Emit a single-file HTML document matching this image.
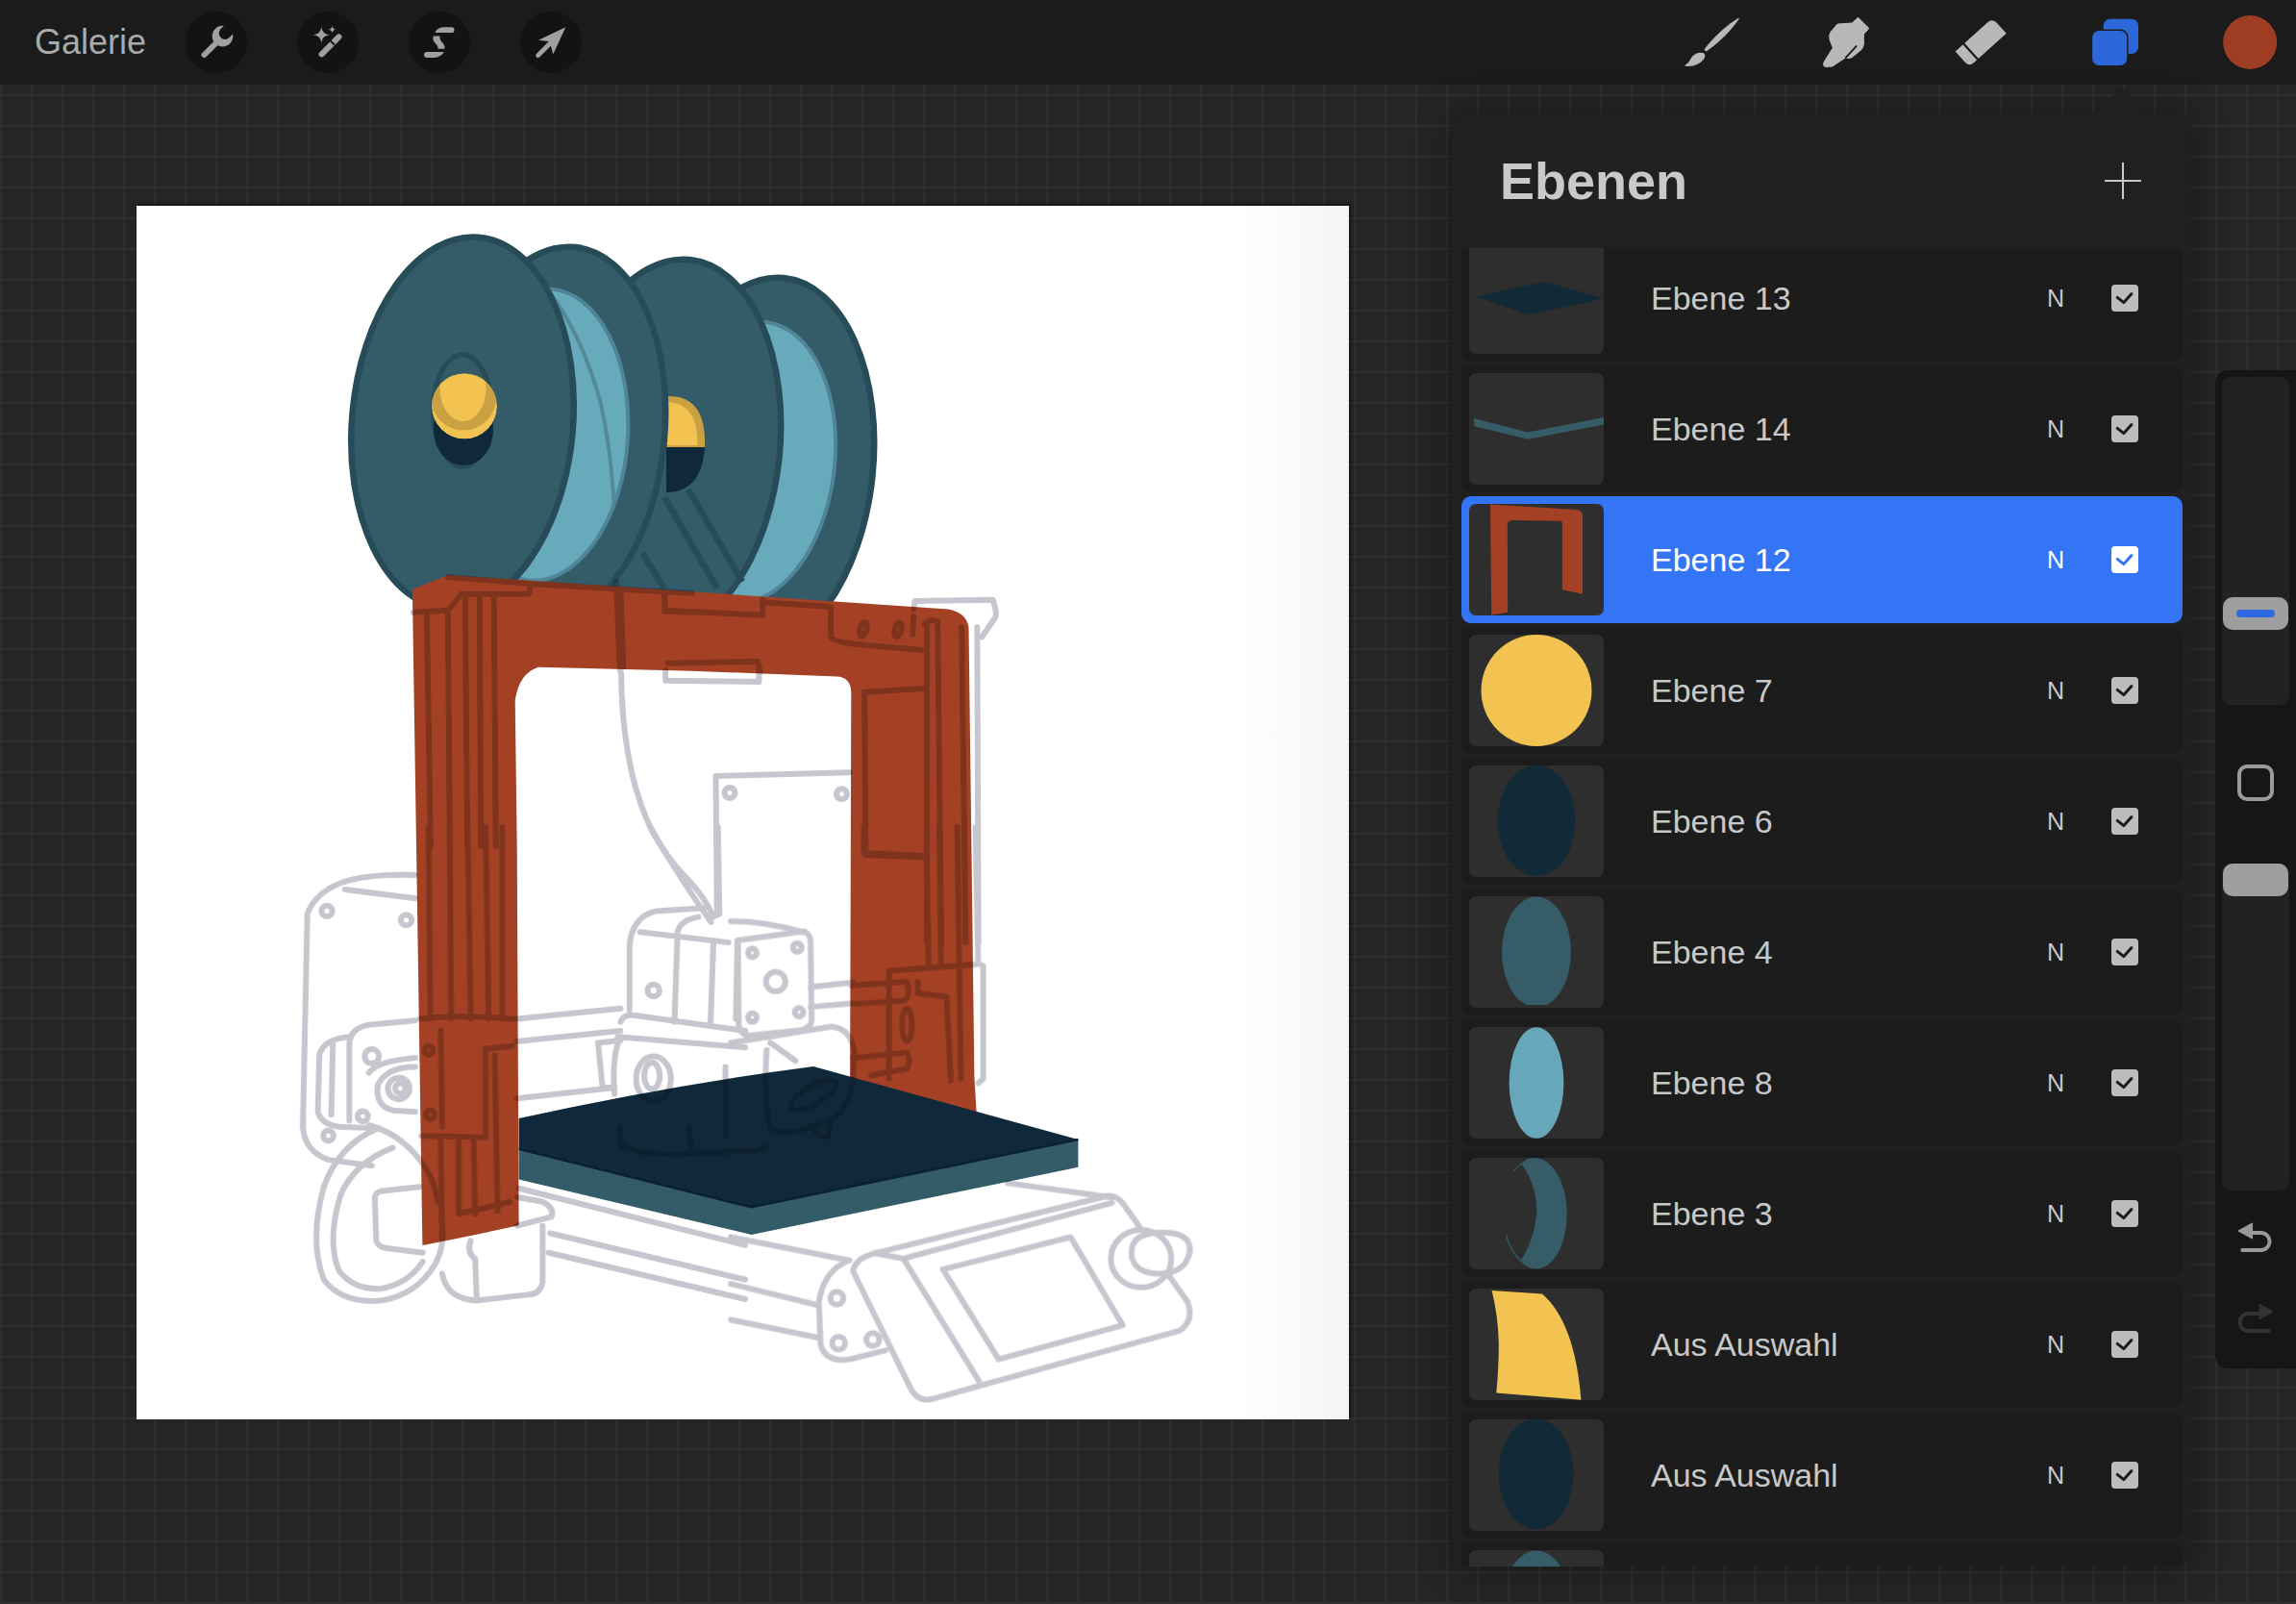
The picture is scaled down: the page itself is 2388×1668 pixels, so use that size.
<!DOCTYPE html>
<html><head><meta charset="utf-8">
<style>
*{margin:0;padding:0;box-sizing:border-box}
html,body{width:2388px;height:1668px;overflow:hidden;background:#252525;font-family:"Liberation Sans",sans-serif}
#grid{position:absolute;left:0;top:0;width:2388px;height:1668px;background-color:#252525;
 background-image:linear-gradient(to right,#2f2f2f 2px,transparent 2px),linear-gradient(to bottom,#2f2f2f 2px,transparent 2px);
 background-size:32px 32px,32px 32px;background-position:0 0,0 2px}
#topbar{position:absolute;left:0;top:0;width:2388px;height:88px;background:#1b1b1b}
.abs{position:absolute}
#galerie{position:absolute;left:36px;top:23px;font-size:36px;color:#aaaaaa;line-height:42px;letter-spacing:0px}
.circ{position:absolute;width:64px;height:64px;border-radius:50%;background:#131313;top:12px}
#canvas{position:absolute;left:142px;top:214px;width:1261px;height:1262px;background:linear-gradient(to right,#ffffff 0%,#ffffff 91%,#f4f4f4 100%);box-shadow:2px -2px 2.5px rgba(0,0,0,.45)}
#panel{position:absolute;left:1510px;top:118px;width:767px;height:1511px;background:#202020;border-radius:14px;box-shadow:0 0 34px 4px rgba(0,0,0,.32)}
#title{position:absolute;left:1560px;top:157px;font-size:54px;font-weight:bold;color:#c9c9c9;line-height:62px}
#list{position:absolute;left:1510px;top:258px;width:767px;height:1371px;overflow:hidden;border-radius:0 0 14px 14px}
.row{position:absolute;left:10px;width:750px;height:132px;border-radius:10px;background:#1c1c1c}
.row.sel{background:#3375f5}
.thumb{position:absolute;left:8px;top:8px;width:140px;height:116px;border-radius:7px;background:#2e2e2e;overflow:hidden}
.thumb svg{position:absolute;left:0;top:0}
.name{position:absolute;left:197px;top:46px;font-size:34px;line-height:40px;color:#c8c8c8;white-space:nowrap}
.sel .name{color:#ffffff}
.blend{position:absolute;left:609px;top:51px;font-size:25px;line-height:30px;color:#c8c8c8}
.sel .blend{color:#ffffff}
.cb{position:absolute;left:676px;top:52px;width:28px;height:28px;border-radius:4px;background:#bdbdbd}
.sel .cb{background:#ffffff}
.cb svg{position:absolute;left:0;top:0}
#side{position:absolute;left:2304px;top:385px;width:110px;height:1038px;border-radius:13px;background:#161616}
.track{position:absolute;left:2311px;width:70px;border-radius:9px;background:#222222}
.sthumb{position:absolute;left:2312px;width:68px;height:34px;border-radius:10px;background:#9e9e9e}
</style></head><body>
<div id="grid"></div>
<div id="topbar"></div>
<div id="galerie">Galerie</div>
<div class="circ" style="left:193px"></div>
<div class="circ" style="left:309px"></div>
<div class="circ" style="left:425px"></div>
<div class="circ" style="left:541px"></div>
<svg class="abs" style="left:0;top:0" width="2388" height="88" viewBox="0 0 2388 88">
 <defs>
  <mask id="wm"><rect x="180" y="0" width="100" height="88" fill="#fff"/><g transform="translate(234,34.6) rotate(-45)"><rect x="0" y="-6.3" width="22" height="12.6" fill="#000"/><circle r="6.3" fill="#000"/></g></mask>
 </defs>
 <!-- wrench -->
 <g fill="#a0a0a0">
  <circle cx="231.5" cy="37.6" r="10.8" mask="url(#wm)"/>
  <line x1="212.5" y1="57" x2="226" y2="43.5" stroke="#a0a0a0" stroke-width="6" stroke-linecap="round"/>
 </g>
 <!-- magic wand -->
 <g fill="#a0a0a0">
  <line x1="334.6" y1="56.4" x2="352.4" y2="38.4" stroke="#a0a0a0" stroke-width="6" stroke-linecap="round"/>
  <line x1="343.6" y1="42.4" x2="348" y2="46.8" stroke="#131313" stroke-width="2"/>
  <path d="M334.3,27.6 Q334.8,35.7 343,36.2 Q334.8,36.7 334.3,44.8 Q333.8,36.7 325.6,36.2 Q333.8,35.7 334.3,27.6 Z"/>
  <path d="M345.5,26.8 Q345.8,30.4 349.4,30.7 Q345.8,31 345.5,34.6 Q345.2,31 341.6,30.7 Q345.2,30.4 345.5,26.8 Z"/>
 </g>
 <!-- selection S -->
 <g fill="#a0a0a0">
  <path d="M452.3,34 Q455,28.3 462,28.3 L469.6,28.3 A2.85,2.85 0 0 1 469.6,34 Z"/>
  <path d="M450.8,37.4 L457.4,37.4 Q457,41 460.5,44.8 Q463.5,48.2 462.2,50.8 L455.6,50.8 Q456,48.6 452.4,44.6 Q449.4,41.2 450.8,37.4 Z"/>
  <path d="M443.9,54.1 L461.8,54.1 Q458.2,59.9 451.5,59.9 L443.9,59.9 A2.9,2.9 0 0 1 443.9,54.1 Z"/>
 </g>
 <!-- arrow -->
 <g fill="#a0a0a0">
  <path d="M588.3,28.3 L560,41.7 L571.8,43.2 L575.3,56.6 Z"/>
  <line x1="559.6" y1="57.6" x2="572" y2="45.2" stroke="#a0a0a0" stroke-width="4.8" stroke-linecap="round"/>
 </g>
 <!-- brush -->
 <g fill="#b8b8b8">
  <path d="M1772.46,51.42 C1782.3,38.57 1793.8,27.5 1807.6,18.9 Q1809.3,18.2 1808.7,19.8 C1799.4,33.2 1787.8,44.3 1774.54,53.58 Z"/>
  <path d="M1772.5,55.4 Q1774.5,58.6 1771.5,62.2 Q1766,68.6 1756,68.9 Q1752.3,69 1752.2,68 Q1756.5,65.8 1758.3,61.5 Q1760.5,56.5 1766.2,55 Q1770.3,54.2 1772.5,55.4 Z"/>
 </g>
 <!-- smudge finger -->
 <g>
  <path fill="#b8b8b8" d="M1896.6,64.6 L1905.8,49.8 L1902.5,41.2 Q1901.6,36.5 1903.4,33.5 L1910.1,25.4 Q1911.5,24.3 1914,24.2 L1926.4,23.4 L1931.6,18.4 Q1932.4,17.7 1933.3,18.4 L1943.7,28.8 Q1944.2,29.6 1943.5,30.4 L1938.9,35.5 L1938.9,46 Q1938.3,50.2 1935.5,52.5 L1926.4,59.9 Q1923.5,61.6 1919.3,60.5 L1905.8,69.5 L1899,70 Q1894.8,69 1896.6,64.6 Z"/>
  <line x1="1919.8" y1="59.8" x2="1930.6" y2="48.1" stroke="#1b1b1b" stroke-width="1.9" stroke-linecap="round"/>
 </g>
 <!-- eraser -->
 <g transform="translate(2060.2,44.1) rotate(-42) scale(1.03)">
  <path fill="#b8b8b8" d="M-25.2,-10.5 L18,-10.5 Q25.2,-10.5 25.2,-3.3 L25.2,10.5 L-19,10.5 Q-25.2,10.5 -25.2,4.5 Z"/>
  <line x1="-13.8" y1="-11" x2="-13.8" y2="11" stroke="#1b1b1b" stroke-width="2.2"/>
 </g>
 <!-- layers -->
 <rect x="2187.8" y="19.8" width="36.2" height="36.2" rx="7" fill="#2d68db"/>
 <rect x="2174.8" y="30.6" width="38.8" height="38.6" rx="8" fill="#1b1b1b"/>
 <rect x="2176.2" y="32" width="36" height="36" rx="7" fill="#2d68db"/>
 <!-- color -->
 <circle cx="2340.2" cy="44" r="28" fill="#9e3d22"/>
</svg>


<div id="canvas"></div>
<svg class="abs" style="left:142px;top:213px" width="1261" height="1263" viewBox="142 213 1261 1263"><!-- spools -->
<g id="spools" stroke="#284b58" stroke-width="6.5">
 <ellipse cx="795" cy="484" rx="113" ry="196" transform="rotate(6 795 484)" fill="#345b68"/>
 <ellipse cx="779" cy="481" rx="89" ry="147" transform="rotate(7 779 481)" fill="#67aabb" stroke="#4f8597" stroke-width="4"/>
 <ellipse cx="697" cy="465" rx="114" ry="196" transform="rotate(6 697 465)" fill="#345b68"/>
 <path d="M691,517 L746,612 M716,509 L772,605 M668,575 L691,612" fill="none"/>
 <path d="M693,412 Q735,410 733,465 L693,465 Z" fill="#c9a142" stroke="none"/><path d="M693,418 Q726,418 725.5,463 L693,463 Z" fill="#f3c351" stroke="none"/>
 <path d="M693,465 L733,465 Q730,512 693,512 Z" fill="#10293a" stroke="none"/>
 <ellipse cx="578" cy="452" rx="113" ry="196" transform="rotate(6 578 452)" fill="#345b68"/>
 <ellipse cx="562" cy="452" rx="91" ry="152" transform="rotate(4 562 452)" fill="#67aabb" stroke="#4f8597" stroke-width="4"/>
 <clipPath id="fil1"><ellipse cx="562" cy="452" rx="89" ry="150" transform="rotate(4 562 452)"/></clipPath><path clip-path="url(#fil1)" d="M573,306 Q606,350 625,420 Q640,490 639,560 Q637,590 628,615" fill="none" stroke="#55899a" stroke-width="4"/>
 <ellipse cx="481" cy="440" rx="115" ry="194" transform="rotate(5 481 440)" fill="#345b68"/>
 <ellipse cx="481" cy="427" rx="30.5" ry="58" fill="none" stroke-width="5"/>
 <ellipse cx="482" cy="447" rx="31" ry="37" fill="#10293a" stroke="none"/>
 <clipPath id="hub1c"><circle cx="483" cy="422.5" r="34"/></clipPath>
 <g clip-path="url(#hub1c)" stroke="none">
  <circle cx="483" cy="422.5" r="34" fill="#f3c351"/>
  <circle cx="482" cy="413.5" r="34" fill="#c9a142"/>
  <ellipse cx="481.5" cy="404" rx="24" ry="34" fill="#f3c351"/>
 </g>
</g>
<!-- frame -->
<path id="frame" d="M428.9,613 L465.8,597.9 L986,633.5 Q1005,637 1007.5,652 L1013.4,1120 L1015.8,1160 L884,1160 L885.3,720 Q885,704 870,703.5 L720,697.7 L560,693.7 Q540,700 535.7,728 L537.7,880 L539.6,1274.3 Q500,1283 439.4,1295 L433,880 Z" fill="#a44124"/>
<!-- bed -->
<path d="M539.6,1163 Q700,1128 846,1109 L1121.4,1185 L781.5,1255.3 L539.6,1194.8 Z" fill="#10293a"/>
<path d="M539.6,1194.8 L781.5,1255.3 L1121.4,1185 L1121.4,1213.7 L781.5,1284 L539.6,1226.6 Z" fill="#345b68"/>
<path d="M539.6,1194.8 L781.5,1255.3 L1121.4,1185" fill="none" stroke="#0b2130" stroke-width="2.5"/>
<g style="mix-blend-mode:multiply" fill="none" stroke="#c6c6ce" stroke-linecap="round" stroke-linejoin="round">
<g stroke-width="6">
<!-- region A1: translate(290,860) scale(0.3117) -->
<g transform="translate(290,860) scale(0.3117)" >
 <path vector-effect="non-scaling-stroke" d="M455,160 Q300,155 210,185 Q120,220 95,290 L80,1000 Q85,1080 165,1110 L310,1130"/>
 <path vector-effect="non-scaling-stroke" d="M220,208 L455,238"/>
 <circle vector-effect="non-scaling-stroke" cx="160" cy="280" r="18"/>
 <circle vector-effect="non-scaling-stroke" cx="425" cy="310" r="18"/>
 <circle vector-effect="non-scaling-stroke" cx="165" cy="1030" r="17"/>
 <circle vector-effect="non-scaling-stroke" cx="280" cy="965" r="17"/>
 <path vector-effect="non-scaling-stroke" d="M455,645 L300,660 Q240,670 235,720 L235,980"/>
 <path vector-effect="non-scaling-stroke" d="M240,700 Q150,705 135,760 L130,950 Q140,990 200,1000 L330,1005"/>
 <path vector-effect="non-scaling-stroke" d="M180,720 L175,960"/>
 <circle vector-effect="non-scaling-stroke" cx="310" cy="765" r="24"/>
 <path vector-effect="non-scaling-stroke" d="M455,800 Q360,800 330,860 Q320,930 380,945 L455,950"/>
 <circle vector-effect="non-scaling-stroke" cx="400" cy="872" r="36"/>
 <circle vector-effect="non-scaling-stroke" cx="405" cy="872" r="17"/>
 <path vector-effect="non-scaling-stroke" d="M300,820 Q330,780 455,770"/>
 <path vector-effect="non-scaling-stroke" d="M330,1005 Q200,1060 150,1200 Q100,1380 150,1510 Q210,1590 340,1580 Q460,1560 520,1460 Q560,1390 540,1300"/>
 <path vector-effect="non-scaling-stroke" d="M380,1070 Q250,1120 205,1230 Q160,1380 200,1480 Q250,1545 340,1540 Q430,1525 480,1450"/>
 <path vector-effect="non-scaling-stroke" d="M300,995 Q400,1020 470,1110 Q520,1170 530,1250"/>
 <path vector-effect="non-scaling-stroke" d="M470,1200 L340,1215 Q320,1220 320,1240 L325,1380 Q330,1400 360,1405 L480,1420"/>
 <path vector-effect="non-scaling-stroke" d="M795,1235 L880,1250 Q920,1270 910,1300 L795,1330"/>
 <path vector-effect="non-scaling-stroke" d="M880,1330 L880,1520 Q870,1560 830,1560 L660,1580 Q560,1575 545,1490"/>
 <path vector-effect="non-scaling-stroke" d="M640,1380 Q625,1420 655,1440 L660,1580"/>
 <path vector-effect="non-scaling-stroke" d="M795,640 L1140,605"/>
 <path vector-effect="non-scaling-stroke" d="M795,715 L1140,680"/>
 <path vector-effect="non-scaling-stroke" d="M795,905 L1115,870"/>
 <path vector-effect="non-scaling-stroke" d="M1065,720 L1140,712 M1065,720 L1080,870 L1120,868"/>
 <path vector-effect="non-scaling-stroke" d="M905,1355 L1556,1510"/>
 <path vector-effect="non-scaling-stroke" d="M900,1420 L1556,1575"/>
 <path vector-effect="non-scaling-stroke" d="M800,1205 L1556,1395"/>
 <path vector-effect="non-scaling-stroke" d="M1170,610 L1170,400 Q1175,300 1260,280 L1420,270"/>
 <path vector-effect="non-scaling-stroke" d="M1205,350 L1500,385"/>
 <path vector-effect="non-scaling-stroke" d="M1330,350 Q1340,310 1400,300 M1330,360 L1320,650"/>
 <path vector-effect="non-scaling-stroke" d="M1450,385 L1440,660"/>
 <path vector-effect="non-scaling-stroke" d="M1530,380 L1525,640"/>
 <circle vector-effect="non-scaling-stroke" cx="1250" cy="545" r="20"/>
 <path vector-effect="non-scaling-stroke" d="M1140,650 Q1150,620 1200,630 L1556,680"/>
 <path vector-effect="non-scaling-stroke" d="M1130,700 L1556,735"/>
 <ellipse vector-effect="non-scaling-stroke" cx="1250" cy="840" rx="58" ry="75"/>
 <ellipse vector-effect="non-scaling-stroke" cx="1245" cy="830" rx="26" ry="44"/>
 <path vector-effect="non-scaling-stroke" d="M1140,700 Q1110,760 1120,890"/>
 <path vector-effect="non-scaling-stroke" d="M1240,0 Q1290,100 1360,170 Q1420,230 1450,300"/>
 <path vector-effect="non-scaling-stroke" d="M1465,0 L1470,290"/>
 <path vector-effect="non-scaling-stroke" d="M1140,1000 L1140,1060 Q1200,1100 1400,1090 L1556,1080"/>
 <path vector-effect="non-scaling-stroke" d="M1370,1000 L1375,1090 M1490,800 L1490,1030"/>
</g>
<!-- region A2: translate(760,860) scale(0.374) -->
<g transform="translate(760,860) scale(0.374)">
 <path vector-effect="non-scaling-stroke" d="M20,315 L205,290 Q225,300 222,330 L225,540 Q220,560 195,565 L50,580 Q25,575 22,550 Z"/>
 <path vector-effect="non-scaling-stroke" d="M0,262 Q100,262 210,295"/>
 <circle vector-effect="non-scaling-stroke" cx="60" cy="350" r="12"/>
 <circle vector-effect="non-scaling-stroke" cx="185" cy="335" r="12"/>
 <circle vector-effect="non-scaling-stroke" cx="125" cy="430" r="27"/>
 <circle vector-effect="non-scaling-stroke" cx="60" cy="530" r="12"/>
 <circle vector-effect="non-scaling-stroke" cx="190" cy="515" r="12"/>
 <path vector-effect="non-scaling-stroke" d="M222,445 L340,432 M222,500 L340,490"/>
 <path vector-effect="non-scaling-stroke" d="M0,600 L280,555 Q340,560 345,640"/>
 <path vector-effect="non-scaling-stroke" d="M110,600 L180,650"/>
 <ellipse vector-effect="non-scaling-stroke" cx="230" cy="745" rx="70" ry="25" transform="rotate(-30 230 745)"/>
 <path vector-effect="non-scaling-stroke" d="M100,620 Q90,760 110,840 Q160,870 300,800 Q350,740 340,640"/>
 <path vector-effect="non-scaling-stroke" d="M230,830 Q240,870 270,860 L280,820"/>
 <path vector-effect="non-scaling-stroke" d="M0,900 Q60,910 100,890"/>
 <path vector-effect="non-scaling-stroke" d="M680,0 L688,380 L702,386 L702,700 L688,712"/>
 <path vector-effect="non-scaling-stroke" d="M0,1140 L330,1205"/>
 <path vector-effect="non-scaling-stroke" d="M0,1270 L245,1330"/>
 <path vector-effect="non-scaling-stroke" d="M0,1370 L245,1420"/>
 <path vector-effect="non-scaling-stroke" d="M330,1205 Q260,1230 245,1320 L250,1440 Q265,1490 330,1480 L430,1455"/>
 <circle vector-effect="non-scaling-stroke" cx="295" cy="1310" r="18"/>
 <circle vector-effect="non-scaling-stroke" cx="300" cy="1435" r="18"/>
 <circle vector-effect="non-scaling-stroke" cx="395" cy="1425" r="18"/>
 <path vector-effect="non-scaling-stroke" d="M1140,1116 L1100,1060 Q1080,1025 1050,1025 L400,1185 Q345,1200 340,1235 L500,1560 Q520,1600 560,1590 L1250,1400 Q1290,1370 1270,1320 L1217,1245"/>
 <path vector-effect="non-scaling-stroke" d="M400,1185 L480,1200 L690,1540"/>
 <path vector-effect="non-scaling-stroke" d="M480,1200 L1060,1045"/>
 <path vector-effect="non-scaling-stroke" d="M590,1230 L945,1140 L1090,1385 L745,1480 Z"/>
 <ellipse vector-effect="non-scaling-stroke" cx="1141" cy="1200" rx="84" ry="80"/>
 <path vector-effect="non-scaling-stroke" d="M1115,1175 Q1120,1130 1190,1128 Q1250,1125 1270,1150 Q1285,1175 1268,1205 Q1250,1240 1190,1242 Q1125,1240 1115,1195 Z"/>
 <path vector-effect="non-scaling-stroke" d="M770,990 L1060,1030"/>
 <!-- right leg details -->
 <path vector-effect="non-scaling-stroke" d="M370,0 L370,72 L545,80 L545,0"/>
 <path vector-effect="non-scaling-stroke" d="M545,80 L550,380 M580,0 L585,390 M630,0 L640,700"/>
 <path vector-effect="non-scaling-stroke" d="M440,400 L680,382 M440,400 L440,700"/>
 <path vector-effect="non-scaling-stroke" d="M335,440 L490,430 Q502,470 482,482 L340,492"/>
 <ellipse vector-effect="non-scaling-stroke" cx="490" cy="550" rx="14" ry="45"/>
 <path vector-effect="non-scaling-stroke" d="M520,430 L520,462 L600,472 L612,705"/>
 <path vector-effect="non-scaling-stroke" d="M340,642 L490,627 Q502,652 490,672 L390,690"/>
</g>
<!-- region B: translate(540,580) scale(0.2494) -->
<g transform="translate(540,580) scale(0.2494)">
 <path vector-effect="non-scaling-stroke" d="M425,480 Q430,900 560,1150 Q700,1380 800,1520"/>
 <path vector-effect="non-scaling-stroke" d="M825,1490 L820,910 L1380,895"/>
 <circle vector-effect="non-scaling-stroke" cx="878" cy="980" r="22"/>
 <circle vector-effect="non-scaling-stroke" cx="1345" cy="985" r="22"/>
 <path vector-effect="non-scaling-stroke" d="M610,470 L610,512 L1000,517 L1000,470"/>
 <path vector-effect="non-scaling-stroke" d="M1645,215 L1650,180 L1975,175 Q1995,230 1985,250 L1930,330"/>
 <path vector-effect="non-scaling-stroke" d="M1910,290 L1915,1604"/>
 <path vector-effect="non-scaling-stroke" d="M1300,210 L1300,330 Q1310,350 1400,360 L1680,385"/>
 <ellipse vector-effect="non-scaling-stroke" cx="1435" cy="298" rx="14" ry="30" transform="rotate(15 1435 298)"/>
 <ellipse vector-effect="non-scaling-stroke" cx="1580" cy="300" rx="14" ry="30" transform="rotate(15 1580 300)"/>
 <path vector-effect="non-scaling-stroke" d="M1645,245 L1640,320"/>
 <path vector-effect="non-scaling-stroke" d="M1700,270 L1700,1604 M1745,265 L1760,1604 M1845,290 L1862,1604"/>
 <path vector-effect="non-scaling-stroke" d="M1690,275 Q1720,250 1745,268"/>
 <path vector-effect="non-scaling-stroke" d="M1440,560 L1690,545 M1440,560 L1445,1240 L1690,1248"/>
 <path vector-effect="non-scaling-stroke" d="M620,440 L995,432 L1005,480"/>
 <path vector-effect="non-scaling-stroke" d="M605,150 L610,220 L1015,240 L1015,175"/>
 <path vector-effect="non-scaling-stroke" d="M405,100 L420,470"/>
 <path vector-effect="non-scaling-stroke" d="M1020,185 L1300,205"/>
</g>
<!-- region C: translate(400,560) scale(0.1995) -->
<g transform="translate(400,560) scale(0.1995)">
 <path vector-effect="non-scaling-stroke" d="M220,390 L240,1604 M330,395 L340,1604 M420,300 L432,1604 M495,300 L502,1604 M570,310 L580,1604"/>
 <path vector-effect="non-scaling-stroke" d="M150,385 L330,375 L400,290 L745,290 Q765,285 752,240"/>
 <path vector-effect="non-scaling-stroke" d="M1230,260 L1245,670"/>
 <path vector-effect="non-scaling-stroke" d="M1460,280 L1460,380 L1604,385"/>
 <path vector-effect="non-scaling-stroke" d="M330,200 L750,235 L1604,285"/>
</g>
<!-- left leg lower: translate(290,860) scale(0.3117) -->
<g transform="translate(290,860) scale(0.3117)">
 <path vector-effect="non-scaling-stroke" d="M500,0 L505,640 M570,0 L575,640 M630,0 L640,640 M690,0 L700,640 M745,0 L745,640"/>
 <path vector-effect="non-scaling-stroke" d="M470,640 Q600,625 780,640"/>
 <path vector-effect="non-scaling-stroke" d="M475,1030 L690,1035 L690,740 L780,730"/>
 <path vector-effect="non-scaling-stroke" d="M540,680 L545,1000"/>
 <circle vector-effect="non-scaling-stroke" cx="500" cy="745" r="15"/>
 <circle vector-effect="non-scaling-stroke" cx="505" cy="960" r="15"/>
 <path vector-effect="non-scaling-stroke" d="M540,1040 L545,1370 M600,1040 L600,1290 M650,1040 L655,1290 M720,760 L730,1280"/>
 <path vector-effect="non-scaling-stroke" d="M600,1290 Q700,1270 770,1250"/>
</g>
</g>
</g>
</svg>

<div id="panel"></div>
<svg class="abs" style="left:2170px;top:88px" width="80" height="32" viewBox="2170 88 80 32"><path d="M2179,118.5 L2203.2,92.6 Q2206.2,89.6 2209.2,92.6 L2233.4,118.5 Z" fill="#202020"/></svg>
<div id="title">Ebenen</div>
<div class="abs" style="left:2188.7px;top:186.6px;width:38px;height:2px;background:#c8c8c8"></div>
<div class="abs" style="left:2206.7px;top:168.6px;width:2px;height:38px;background:#c8c8c8"></div>
<div id="list">
<div class="row" style="top:-14px"><div class="thumb"><svg width="140" height="116" viewBox="0 0 140 116"><path d="M7.4,56.6 L78.6,40.8 L140,58.6 L62.7,75.2 Z" fill="#122a37"/></svg></div><div class="name">Ebene 13</div><div class="blend">N</div><div class="cb"><svg width="28" height="28" viewBox="0 0 28 28"><path d="M6.2,13.4 L12.9,18.6 L21,9.6" fill="none" stroke="#1c1c1c" stroke-width="3" stroke-linecap="round" stroke-linejoin="round"/></svg></div></div>
<div class="row" style="top:122px"><div class="thumb"><svg width="140" height="116" viewBox="0 0 140 116"><path d="M5,47 L61,61.5 L140,46 L140,53.4 L61,68.8 L5,55 Z" fill="#365c68"/></svg></div><div class="name">Ebene 14</div><div class="blend">N</div><div class="cb"><svg width="28" height="28" viewBox="0 0 28 28"><path d="M6.2,13.4 L12.9,18.6 L21,9.6" fill="none" stroke="#1c1c1c" stroke-width="3" stroke-linecap="round" stroke-linejoin="round"/></svg></div></div>
<div class="row sel" style="top:258px"><div class="thumb"><svg width="140" height="116" viewBox="0 0 140 116"><path d="M22,0.6 L112,6 Q118,7 118,13 L118,93.7 L96.8,89.2 L96.8,20 Q96.8,17.8 94,17.8 L44,16.9 Q40,17.5 39.8,22 L40.2,112.7 L23.2,115.4 Z" fill="#a44124"/></svg></div><div class="name">Ebene 12</div><div class="blend">N</div><div class="cb"><svg width="28" height="28" viewBox="0 0 28 28"><path d="M6.2,13.4 L12.9,18.6 L21,9.6" fill="none" stroke="#3375f5" stroke-width="3" stroke-linecap="round" stroke-linejoin="round"/></svg></div></div>
<div class="row" style="top:394px"><div class="thumb"><svg width="140" height="116" viewBox="0 0 140 116"><ellipse cx="70" cy="58" rx="57.5" ry="58" fill="#f3c351"/></svg></div><div class="name">Ebene 7</div><div class="blend">N</div><div class="cb"><svg width="28" height="28" viewBox="0 0 28 28"><path d="M6.2,13.4 L12.9,18.6 L21,9.6" fill="none" stroke="#1c1c1c" stroke-width="3" stroke-linecap="round" stroke-linejoin="round"/></svg></div></div>
<div class="row" style="top:530px"><div class="thumb"><svg width="140" height="116" viewBox="0 0 140 116"><ellipse cx="70" cy="57.5" rx="40.5" ry="57.5" fill="#122a37"/></svg></div><div class="name">Ebene 6</div><div class="blend">N</div><div class="cb"><svg width="28" height="28" viewBox="0 0 28 28"><path d="M6.2,13.4 L12.9,18.6 L21,9.6" fill="none" stroke="#1c1c1c" stroke-width="3" stroke-linecap="round" stroke-linejoin="round"/></svg></div></div>
<div class="row" style="top:666px"><div class="thumb"><svg width="140" height="116" viewBox="0 0 140 116"><clipPath id="c4"><rect x="0" y="0" width="140" height="113.5"/></clipPath><ellipse cx="70" cy="58" rx="36" ry="57.5" fill="#365c68" clip-path="url(#c4)"/><path d="M57,116 Q58,113.2 64,113 L85,113 L82,116 Z" fill="#2e2e2e"/></svg></div><div class="name">Ebene 4</div><div class="blend">N</div><div class="cb"><svg width="28" height="28" viewBox="0 0 28 28"><path d="M6.2,13.4 L12.9,18.6 L21,9.6" fill="none" stroke="#1c1c1c" stroke-width="3" stroke-linecap="round" stroke-linejoin="round"/></svg></div></div>
<div class="row" style="top:802px"><div class="thumb"><svg width="140" height="116" viewBox="0 0 140 116"><ellipse cx="70" cy="58" rx="28.4" ry="57.8" fill="#66a8ba"/></svg></div><div class="name">Ebene 8</div><div class="blend">N</div><div class="cb"><svg width="28" height="28" viewBox="0 0 28 28"><path d="M6.2,13.4 L12.9,18.6 L21,9.6" fill="none" stroke="#1c1c1c" stroke-width="3" stroke-linecap="round" stroke-linejoin="round"/></svg></div></div>
<div class="row" style="top:938px"><div class="thumb"><svg width="140" height="116" viewBox="0 0 140 116"><path d="M67.3,0 C88,0 101.7,28 101.7,57 C101.7,90 88,115.4 69.6,115.4 C62,115.4 57,111 53.3,107 C62,95 68,78 70,60 C72,42 65,20 54.1,6 C58,2 62,0 67.3,0 Z" fill="#365c68"/><path d="M54.6,6.5 Q50,9 46.4,13.4 M38.3,79.5 Q42,95 53.3,107" stroke="#365c68" stroke-width="1.3" fill="none"/></svg></div><div class="name">Ebene 3</div><div class="blend">N</div><div class="cb"><svg width="28" height="28" viewBox="0 0 28 28"><path d="M6.2,13.4 L12.9,18.6 L21,9.6" fill="none" stroke="#1c1c1c" stroke-width="3" stroke-linecap="round" stroke-linejoin="round"/></svg></div></div>
<div class="row" style="top:1074px"><div class="thumb"><svg width="140" height="116" viewBox="0 0 140 116"><path d="M23.6,1.9 L76,5.5 Q110,35 116.4,115.7 L28.3,108.5 Q31,80 30.8,56 Q30,28 23.6,1.9 Z" fill="#f3c351"/></svg></div><div class="name">Aus Auswahl</div><div class="blend">N</div><div class="cb"><svg width="28" height="28" viewBox="0 0 28 28"><path d="M6.2,13.4 L12.9,18.6 L21,9.6" fill="none" stroke="#1c1c1c" stroke-width="3" stroke-linecap="round" stroke-linejoin="round"/></svg></div></div>
<div class="row" style="top:1210px"><div class="thumb"><svg width="140" height="116" viewBox="0 0 140 116"><ellipse cx="69.6" cy="57" rx="38.9" ry="57.5" fill="#122a37"/></svg></div><div class="name">Aus Auswahl</div><div class="blend">N</div><div class="cb"><svg width="28" height="28" viewBox="0 0 28 28"><path d="M6.2,13.4 L12.9,18.6 L21,9.6" fill="none" stroke="#1c1c1c" stroke-width="3" stroke-linecap="round" stroke-linejoin="round"/></svg></div></div>
<div class="row" style="top:1346px"><div class="thumb"><svg width="140" height="116" viewBox="0 0 140 116"><ellipse cx="70" cy="58" rx="36" ry="57.5" fill="#365c68"/></svg></div><div class="name">Ebene 2</div><div class="blend">N</div><div class="cb"><svg width="28" height="28" viewBox="0 0 28 28"><path d="M6.2,13.4 L12.9,18.6 L21,9.6" fill="none" stroke="#1c1c1c" stroke-width="3" stroke-linecap="round" stroke-linejoin="round"/></svg></div></div>
</div>

<div id="side"></div>
<div class="track" style="top:392px;height:341px"></div>
<div class="sthumb" style="top:621px"></div>
<div class="abs" style="left:2326px;top:634px;width:40px;height:8px;border-radius:4px;background:#2f6ae3"></div>
<div class="abs" style="left:2327px;top:795px;width:38px;height:38px;border-radius:10px;border:4px solid #9a9a9a"></div>
<div class="track" style="top:898px;height:340px"></div>
<div class="sthumb" style="top:898px"></div>
<svg class="abs" style="left:2304px;top:1250px" width="84" height="150" viewBox="2304 1250 84 150">
 <path d="M2328.6,1280 L2342.3,1272.3 L2342.3,1287.7 Z" fill="#999" stroke="#999" stroke-width="1.5" stroke-linejoin="round"/>
 <path d="M2340,1282 L2351.5,1282 A9,9 0 0 1 2351.5,1300 L2332.2,1300" fill="none" stroke="#999" stroke-width="3.8" stroke-linecap="round"/>
 <path d="M2363.2,1364 L2350.5,1356.5 L2350.5,1371.5 Z" fill="#333" stroke="#333" stroke-width="1.5" stroke-linejoin="round"/>
 <path d="M2352,1366 L2338.5,1366 A9,9 0 0 0 2338.5,1384 L2359.5,1384" fill="none" stroke="#333" stroke-width="3.8" stroke-linecap="round"/>
</svg>

</body></html>
